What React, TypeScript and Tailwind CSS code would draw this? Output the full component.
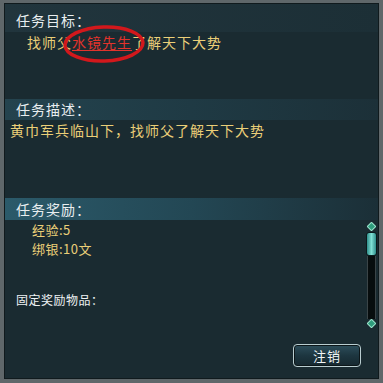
import React from "react";

const font = { fontFamily: '"Noto Sans CJK SC", "Noto Sans", sans-serif' };

function Header({ title, className }: { title: string; className: string }) {
  return (
    <div className={`flex items-center pl-[11px] text-[14px] tracking-[1px] text-[#e9eef0] ${className}`}>
      {title}
    </div>
  );
}

function ScrollBar() {
  return (
    <div className="absolute right-[2px] top-[219px] flex w-[10px] flex-col items-center">
      {/* top arrow */}
      <div className="h-[7px] w-[7px] rotate-45 rounded-[1px] border border-[#9fe8d0] bg-[#2f9c7c]" />
      {/* thumb */}
      <div className="mt-[2px] h-[24px] w-[11px] rounded-[3px] border border-[#0b1a1c] bg-gradient-to-r from-[#2f8f8c] via-[#7fe0d4] to-[#2f8f8c]" />
      {/* track */}
      <div className="h-[63px] w-[9px] border-x border-[#3b4548] bg-[#070d0e]" />
      {/* bottom arrow */}
      <div className="mt-[1px] h-[7px] w-[7px] rotate-45 rounded-[1px] border border-[#9fe8d0] bg-[#2f9c7c]" />
    </div>
  );
}

export default function App() {
  return (
    <div className="h-[383px] w-[383px] overflow-hidden bg-[#5f676a] pb-[4px] pl-[4px] pr-[4px] pt-[3px]" style={font}>
      <div className="relative flex h-full w-full flex-col border border-[#101a1d] bg-[#1a2b31]">
        <Header title="任务目标：" className="h-[28px] pt-[5px] bg-gradient-to-r from-[#21353d] to-[#1c2f36]" />
        <div className="flex h-[20px] items-center pl-[22px] text-[14px] tracking-[1px] text-[#ebcf78]">
          找师父<span className="text-[#e2332c] underline decoration-[#e2332c] underline-offset-2">水镜先生</span>了解天下大势
        </div>

        <Header title="任务描述：" className="mt-[47px] h-[21px] bg-gradient-to-r from-[#24434e] via-[#1f3a44] to-[#1c3038]" />
        <div className="flex h-[20px] items-center pl-[5px] text-[14px] tracking-[1px] text-[#ebcf78]">
          黄巾军兵临山下，找师父了解天下大势
        </div>

        <Header title="任务奖励：" className="mt-[58px] h-[22px] bg-gradient-to-r from-[#2b5a6a] via-[#234754] to-[#1b2f37]" />
        <div className="flex h-[19px] items-center pl-[27px] text-[13px] tracking-[0.5px] text-[#ebcf78]">经验:5</div>
        <div className="flex h-[19px] items-center pl-[27px] text-[13px] tracking-[0.5px] text-[#ebcf78]">绑银:10文</div>

        <div className="mt-[32px] flex h-[20px] items-center pl-[11px] text-[12px] tracking-[0.5px] text-[#eef2f3]">
          固定奖励物品：
        </div>

        <div className="mt-auto mb-[11px] flex justify-end pr-[17px]">
          <button className="flex h-[23px] w-[68px] items-center justify-center rounded-[4px] border border-[#b9cdd0] bg-gradient-to-b from-[#2e4f5c] via-[#1d3640] to-[#16282f] text-[13px] tracking-[1px] text-[#f2f5f6] shadow-[inset_0_0_0_1px_#0c1619]">
            注销
          </button>
        </div>

        <ScrollBar />

        {/* red annotation ring */}
        <svg className="absolute left-[56px] top-[19px]" width="86" height="42" viewBox="0 0 86 42">
          <ellipse cx="43" cy="21" rx="39" ry="17" fill="none" stroke="#d2181c" strokeWidth="3.5" transform="rotate(-2 43 21)" />
        </svg>
      </div>
    </div>
  );
}
